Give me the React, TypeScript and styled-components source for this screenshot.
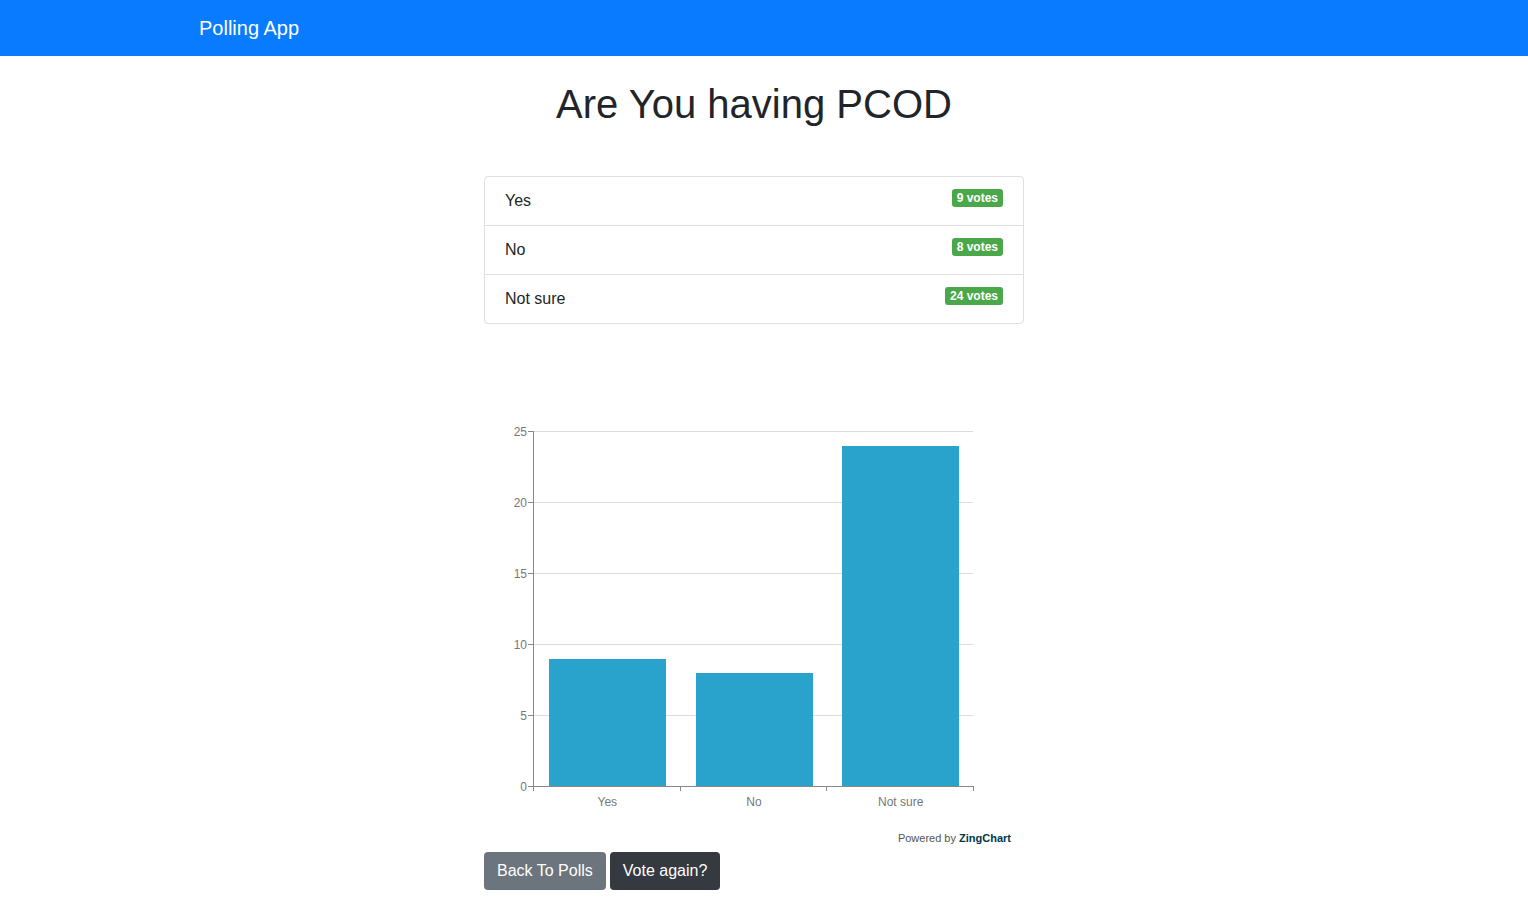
import React from "react";
import styled, { createGlobalStyle } from "styled-components";

const Global = createGlobalStyle`
  html, body { margin: 0; padding: 0; background: #fff; }
  body { font-family: "Liberation Sans", Arial, sans-serif; color: #212529; font-size: 16px; line-height: 1.5; }
`;

const NavBar = styled.nav`
  height: 56px;
  background: #097bff;
  display: flex;
  align-items: center;
  padding-left: 199px;
`;

const Brand = styled.a`
  color: #fff;
  font-size: 20px;
  line-height: 30px;
  text-decoration: none;
`;

const Main = styled.main`
  width: 540px;
  margin-left: calc(50% - 280px);
  display: flex;
  flex-direction: column;
`;

const Title = styled.h1`
  margin: 24px -200px 48px;
  text-align: center;
  font-size: 40px;
  font-weight: 500;
  line-height: 48px;
  color: #212529;
`;

const List = styled.ul`
  list-style: none;
  margin: 0;
  padding: 0;
  border: 1px solid rgba(0, 0, 0, 0.125);
  border-radius: 4px;
`;

const Item = styled.li<{ $first?: boolean }>`
  display: flex;
  justify-content: space-between;
  align-items: flex-start;
  padding: 12px 20px 12px 20px;
  height: 24px;
  border-top: ${(p) => (p.$first ? "none" : "1px solid rgba(0,0,0,0.125)")};
`;

const Label = styled.span`
  font-size: 16px;
  line-height: 24px;
`;

const Badge = styled.span`
  background: #4ba84a;
  color: #fff;
  font-size: 12px;
  font-weight: 700;
  line-height: 12px;
  padding: 3px 5px 3px;
  border-radius: 3px;
`;

const ChartBox = styled.div`
  width: 540px;
  height: 528px;
`;

const Buttons = styled.div`
  display: flex;
  gap: 4px;
`;

const Btn = styled.button<{ $dark?: boolean }>`
  font-family: "Liberation Sans", Arial, sans-serif;
  font-size: 16px;
  line-height: 24px;
  padding: 7px 13px;
  border: none;
  border-radius: 4px;
  color: #fff;
  background: ${(p) => (p.$dark ? "#343a40" : "#6c757d")};
`;

const data = [
  { label: "Yes", votes: 9 },
  { label: "No", votes: 8 },
  { label: "Not sure", votes: 24 },
];

function Chart() {
  const left = 49;
  const right = 489;
  const top = 107;
  const bottom = 462;
  const max = 25;
  const y = (v: number) => Math.round(bottom - (v / max) * (bottom - top)) + 1;
  const gy = (v: number) => bottom - (v / max) * (bottom - top);
  const slot = (right - left) / data.length;
  const ticks = [0, 5, 10, 15, 20, 25];
  return (
    <svg width="540" height="528" viewBox="0 0 540 528">
      {ticks.map((t) => (
        <g key={t}>
          {t > 0 && <line x1={left} x2={right} y1={gy(t) + 0.5} y2={gy(t) + 0.5} stroke="#dcdcdc" strokeWidth="1" />}
          <line x1={left - 5} x2={left} y1={gy(t) + 0.5} y2={gy(t) + 0.5} stroke="#888" strokeWidth="1" />
          <text x={left - 6} y={gy(t) + 4.5} textAnchor="end" fontSize="12" fill="#777" fontFamily="Liberation Sans, Arial, sans-serif">
            {t}
          </text>
        </g>
      ))}
      {data.map((d, i) => {
        const x0 = Math.round(left + i * slot + 16);
        const w = 117;
        return (
          <g key={d.label}>
            <rect x={x0} y={y(d.votes)} width={w} height={bottom - y(d.votes)} fill="#29a2cc" />
            <text x={left + i * slot + slot / 2 + 1} y={bottom + 20} textAnchor="middle" fontSize="12" fill="#777" fontFamily="Liberation Sans, Arial, sans-serif">
              {d.label}
            </text>
          </g>
        );
      })}
      <line x1={left + 0.5} x2={left + 0.5} y1={top} y2={bottom} stroke="#888" strokeWidth="1" />
      <line x1={left} x2={right} y1={bottom + 0.5} y2={bottom + 0.5} stroke="#888" strokeWidth="1" />
      {[0, 1, 2, 3].map((i) => (
        <line key={i} x1={Math.round(left + i * slot) + 0.5} x2={Math.round(left + i * slot) + 0.5} y1={bottom} y2={bottom + 5} stroke="#888" strokeWidth="1" />
      ))}
      <text x={527} y={518} textAnchor="end" fontSize="11" fill="#555" fontFamily="Liberation Sans, Arial, sans-serif">
        Powered by <tspan fontWeight="700" fill="#003849">ZingChart</tspan>
      </text>
    </svg>
  );
}

export default function App() {
  return (
    <>
      <Global />
      <NavBar>
        <Brand href="#">Polling App</Brand>
      </NavBar>
      <Main>
        <Title>Are You having PCOD</Title>
        <List>
          {data.map((d, i) => (
            <Item key={d.label} $first={i === 0}>
              <Label>{d.label}</Label>
              <Badge>{d.votes} votes</Badge>
            </Item>
          ))}
        </List>
        <ChartBox>
          <Chart />
        </ChartBox>
        <Buttons>
          <Btn>Back To Polls</Btn>
          <Btn $dark>Vote again?</Btn>
        </Buttons>
      </Main>
    </>
  );
}
